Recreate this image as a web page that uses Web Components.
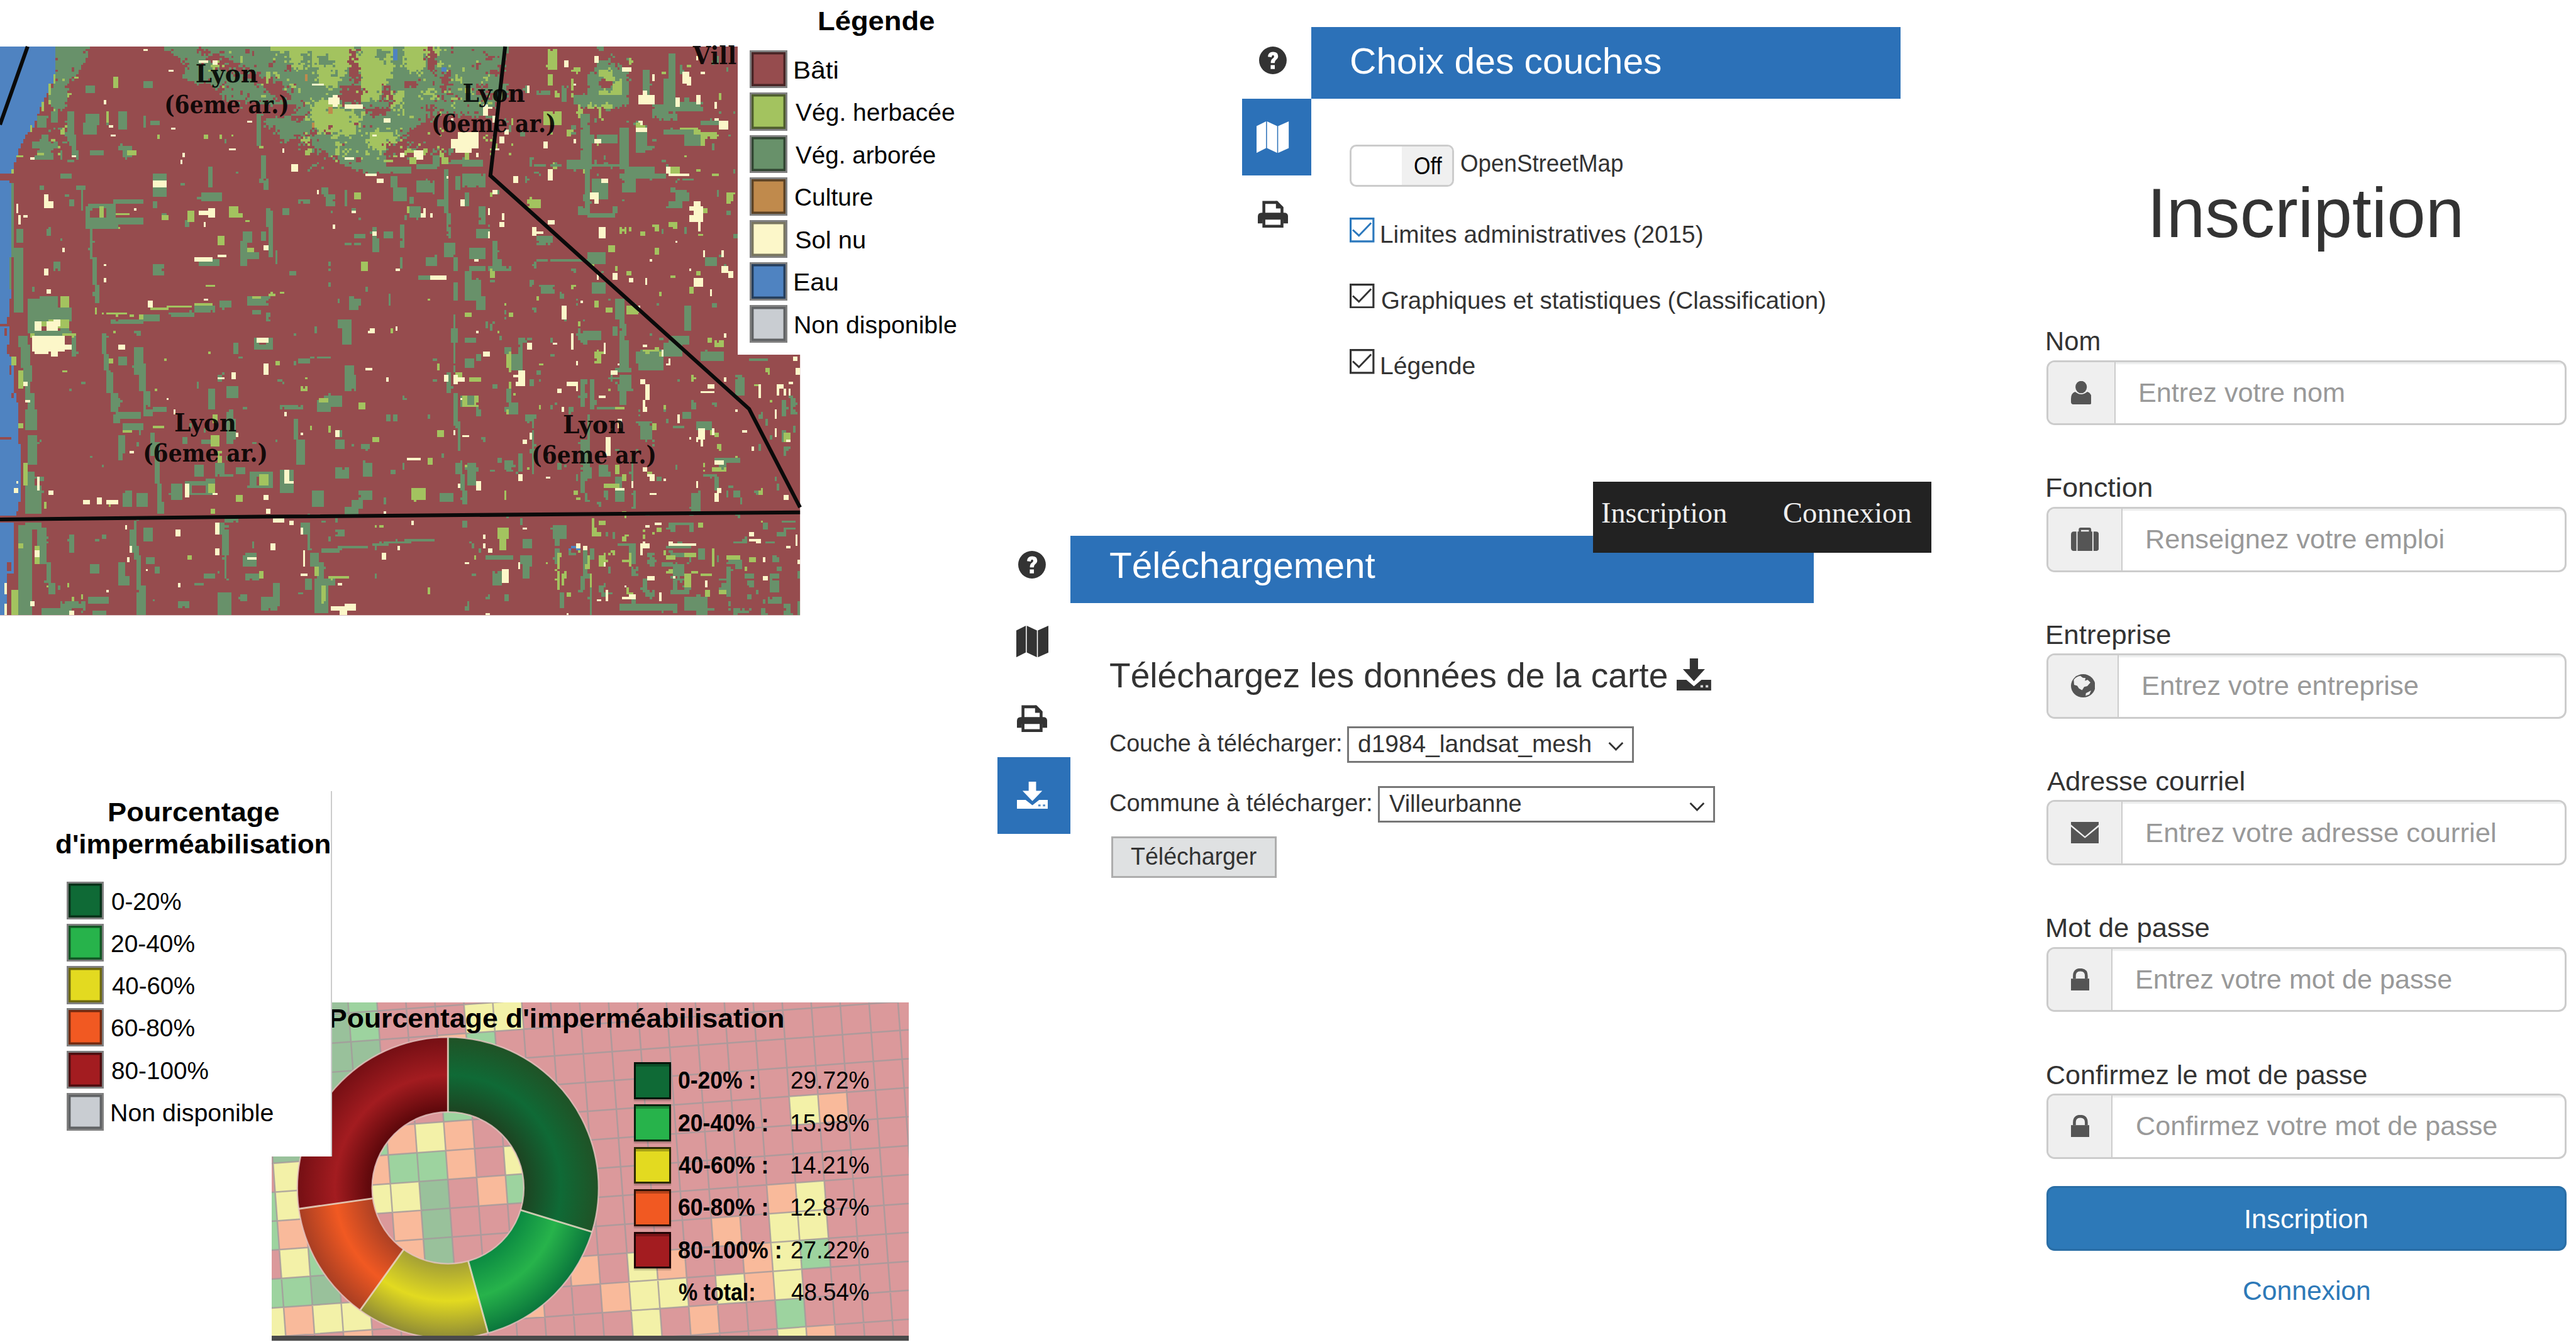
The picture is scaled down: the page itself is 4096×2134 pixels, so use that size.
<!DOCTYPE html>
<html lang="fr">
<head>
<meta charset="utf-8">
<title>Inscription</title>
<style>
/* 1rem = ten layout units on a 1568-unit wide board */
html{font-size:calc(100vw / 156.8)}
body{margin:0;display:flex;height:100vh;overflow:hidden;background:#fff;color:#333;font-family:"Liberation Sans",Arial,sans-serif;font-size:1.48rem}
.left{width:60rem;flex:none;display:flex;flex-direction:column;position:relative}
.mid{width:64.56rem;flex:none;display:flex;flex-direction:column;position:relative}
.right{width:31.65rem;flex:none;display:flex;flex-direction:column}
land-map{margin-top:2.84rem}
.lc1{position:absolute;left:44.9rem;top:0;--pl:.75rem;--h:21.6rem;--w:15rem;--pitch:2.585rem}
.lc1 h2{margin:0;height:2.92rem;line-height:2.62rem;font-size:1.62rem;padding-left:4.15rem}
.imperv{position:relative;margin-top:10.69rem;height:33.5rem}
.lc2{position:absolute;left:2rem;top:0;--pl:2.05rem;--h:22.26rem;--w:18.22rem;--pitch:2.575rem;--edge:.11rem solid #ccc}
.lc2 h2{margin:0 0 1.12rem;padding:.3rem 0 0 0;font-size:1.62rem;line-height:1.98rem;font-weight:bold}
.lc2 h2 div:first-child{padding-left:2.53rem}
.lc2 h2 div:last-child{margin-left:-.69rem}
imperv-chart{padding:12.88rem 0 0 16.52rem}
.p1{margin:1.32rem 0 0 15.61rem;height:30.72rem;--rail:4.2rem;--nudge:.45rem;--ht:.34rem;--hw:35.88rem;--hh:4.34rem;--hp:.24rem;--tab:4.69rem}
.p2{margin-left:.72rem;--rail:4.44rem;--nudge:.22rem;--ht:.57rem;--hw:45.26rem;--hh:4.12rem;--hp:.48rem;--tab:4.68rem}
h3{margin:0;font-weight:normal;font-size:2.1rem;display:flex;align-items:center;height:3rem;padding-top:2.87rem}
h1{margin:0;padding:10rem 0 3.76rem;height:6rem;line-height:6rem;font-weight:normal;font-size:4.25rem;text-align:center}
a{color:#2d79b8;text-align:center;line-height:2rem;margin-top:1.4rem;font-size:1.65rem}
</style>
</head>
<body>
<section class="left">
  <land-map></land-map>
  <legend-card class="lc1"><h2 slot="title" style="color:#000"><t-fit w="71.2">Légende</t-fit></h2>
    <legend-row color="#964c4e" w="26.8">Bâti</legend-row>
    <legend-row color="#a3c35f" w="97.6">Vég. herbacée</legend-row>
    <legend-row color="#68916a" w="86">Vég. arborée</legend-row>
    <legend-row color="#c08a4c" w="47.8">Culture</legend-row>
    <legend-row color="#fcf7c9" w="43">Sol nu</legend-row>
    <legend-row color="#4f83c1" w="26.8">Eau</legend-row>
    <legend-row color="#c9cdd2" w="98.8">Non disponible</legend-row>
  </legend-card>
  <div class="imperv">
    <imperv-chart></imperv-chart>
    <legend-card class="lc2"><h2 slot="title" style="color:#000"><div><t-fit w="104.6">Pourcentage</t-fit></div><div><t-fit w="167.6">d'imperméabilisation</t-fit></div></h2>
      <legend-row color="#0f6a36" w="42.8">0-20%</legend-row>
      <legend-row color="#27b34b" w="51">20-40%</legend-row>
      <legend-row color="#e3da20" w="51">40-60%</legend-row>
      <legend-row color="#f15922" w="51">60-80%</legend-row>
      <legend-row color="#a31c20" w="59.3">80-100%</legend-row>
      <legend-row color="#c9cdd2" w="99">Non disponible</legend-row>
    </legend-card>
  </div>
</section>

<section class="mid">
  <side-panel class="p1" icons="help,map,print" active="map">
    <t-fit slot="title" w="189.5">Choix des couches</t-fit>
    <toggle-row></toggle-row>
    <check-row accent="#2b78bd" w="196">Limites administratives (2015)</check-row>
    <check-row accent="#333" w="270.8">Graphiques et statistiques (Classification)</check-row>
    <check-row accent="#333" w="57.4">Légende</check-row>
  </side-panel>
  <side-panel class="p2" icons="help,map,print,download" active="download">
    <t-fit slot="title" w="162.4">Téléchargement</t-fit>
    <h3><t-fit w="340">Téléchargez les données de la carte</t-fit><ui-icon name="download" style="width:2.1rem;height:1.95rem;margin:0 0 .1rem .56rem"></ui-icon></h3>
    <select-row style="margin-top:1.6rem" label="Couche à télécharger:" lw="141.3" gap="3.6" box="174.6" w="142">d1984_landsat_mesh</select-row>
    <select-row style="margin-top:1.42rem" label="Commune à télécharger:" lw="159.7" gap="4.1" box="205" w="81">Villeurbanne</select-row>
    <grey-button style="margin-top:.84rem"><t-fit w="77.6">Télécharger</t-fit></grey-button>
  </side-panel>
  <nav-strip></nav-strip>
</section>

<section class="right">
  <h1><t-fit w="187.6">Inscription</t-fit></h1>
  <form-field label="Nom" lw="32.6" icon="user" iw="12.6" ih="14.2" aw="42.3" w="125">Entrez votre nom</form-field>
  <form-field label="Fonction" lw="64.2" icon="case" iw="17" ih="14.2" aw="46.7" w="181">Renseignez votre emploi</form-field>
  <form-field label="Entreprise" lw="75.8" icon="globe" iw="14.8" ih="14.2" aw="44.4" w="168.2">Entrez votre entreprise</form-field>
  <form-field label="Adresse courriel" lw="120.6" icon="mail" iw="17" ih="13" aw="46.7" w="212.6">Entrez votre adresse courriel</form-field>
  <form-field label="Mot de passe" lw="99.3" icon="lock" iw="11.4" ih="13.4" aw="40.6" w="192.4">Entrez votre mot de passe</form-field>
  <form-field label="Confirmez le mot de passe" lw="195.3" icon="lock" iw="11.4" ih="13.4" aw="40.6" w="220">Confirmez votre mot de passe</form-field>
  <submit-button><t-fit w="74.7">Inscription</t-fit></submit-button>
  <a><t-fit w="77.4">Connexion</t-fit></a>
</section>

<script>
const U = innerWidth / 1568;
function define(name, html, setup) {
  customElements.define(name, class extends HTMLElement {
    connectedCallback() {
      if (this.shadowRoot) return;
      const root = this.attachShadow({ mode: 'open' });
      root.innerHTML = typeof html === 'function' ? html(this) : html;
      if (setup) setup(this, root);
    }
  });
}

const ICONS = {
  help: ['0 0 20 20', '<circle cx="10" cy="10" r="10" fill="currentColor"/><path d="M6.4 7.4Q6.6 3.9 10.1 3.9Q13.8 4 13.8 7Q13.8 8.7 12.4 9.6Q11.3 10.4 11.3 12H8.5Q8.4 9.6 10 8.6Q10.9 8 10.9 7.2Q10.9 6.3 10 6.3Q9.1 6.4 9.1 7.7Z M8.4 13.4h3v2.9h-3z" fill="var(--hole,#fff)"/>'],
  map: ['0 0 20 20', '<path d="M0 3L5.9 0V17L0 20ZM6.5 0L12.8 3V20L6.5 17ZM13.4 3L20 0V17L13.4 20Z" fill="currentColor"/>'],
  print: ['0 0 20 18', '<path d="M4 9V1.2H12.6L16 4.6V9" fill="none" stroke="currentColor" stroke-width="1.9"/><path d="M12 0V5.2H17Z" fill="currentColor"/><path d="M2.6 8H17.4Q20 8 20 10.6V15H16.8V12.6H3.2V15H0V10.6Q0 8 2.6 8Z" fill="currentColor"/><path d="M4 12V16.9H16V12" fill="none" stroke="currentColor" stroke-width="1.9"/>'],
  download: ['0 0 20 18', '<path d="M7.6 0h4.8v6H16.4L10 12.8 3.6 6H7.6Z" fill="currentColor"/><path d="M0 12H5.6L10 15.6 14.4 12H20V18H0Z" fill="currentColor"/><path d="M13.8 15h1.5v1.3h-1.5zM16.8 15h1.5v1.3h-1.5z" fill="var(--hole,#fff)" opacity=".8"/>'],
  user: ['0 0 12 14', '<ellipse cx="5.9" cy="3.6" rx="3.3" ry="3.7" fill="currentColor"/><path d="M2.4 6.4Q5.9 9.4 9.4 6.4Q12 7.2 12 10.6V12.5Q12 14 10.5 14H1.5Q0 14 0 12.5V10.6Q0 7.2 2.4 6.4Z" fill="currentColor"/>'],
  case: ['0 0 17 14', '<path d="M5.4 3V1.1Q5.4.7 5.9.7H11.1Q11.6.7 11.6 1.1V3" fill="none" stroke="currentColor" stroke-width="1.4"/><path d="M4 2.4H13V14H4ZM3.3 2.4V14H1.8Q0 14 0 12.2V4.2Q0 2.4 1.8 2.4ZM13.7 2.4H15.2Q17 2.4 17 4.2V12.2Q17 14 15.2 14H13.7Z" fill="currentColor"/>'],
  globe: ['0 0 14 14', '<circle cx="7" cy="7" r="7" fill="currentColor"/><path d="M1.6 3.4Q3 1.4 5.4 1L6.8 2.2 8.4 2.4 8 4 9.6 3.4 11.2 5 9.4 7.2 7.6 7.6 6.4 9.6 4.6 8.6 3.6 7 1.8 6.4ZM8.6 11.4L11.6 9.8 10.6 12.2 8.4 13Z" fill="#efefef"/>'],
  mail: ['0 0 17 13', '<path d="M0 0H17V1.6L8.5 8.8 0 1.6ZM0 2.9L8.5 9.9 17 2.9V13H0Z" fill="currentColor"/>'],
  lock: ['0 0 11 13', '<path d="M2 6V4.4Q2 .8 5.5.8T9 4.4V6" fill="none" stroke="currentColor" stroke-width="1.7"/><path d="M0 6H11V13H0Z" fill="currentColor"/>']
};
define('ui-icon', el => { const [vb, art] = ICONS[el.getAttribute('name')];
  return `<style>:host{display:block;flex:none}svg{display:block;width:100%;height:100%}</style><svg viewBox="${vb}" preserveAspectRatio="none">${art}</svg>`; });

define('legend-row', el => `<style>:host{display:flex;align-items:center;height:var(--pitch,2.58rem);font-size:1.52rem;color:#000}
i{box-sizing:border-box;width:2.28rem;height:2.32rem;border:.12rem solid #808080;background:${el.getAttribute('color')};box-shadow:inset 0 0 0 .13rem rgba(0,0,0,.52);margin-right:.42rem}
t-fit{margin-top:.1rem}</style>
<i></i><t-fit w="${el.getAttribute('w')}">${el.textContent}</t-fit>`);
define('legend-card', `<style>:host{display:block;box-sizing:border-box;background:#fff;width:var(--w);height:var(--h);padding-left:var(--pl);border-right:var(--edge,none)}</style><slot name="title"></slot><slot></slot>`);

define('side-panel', el => `<style>:host{display:flex;align-items:flex-start}
.rail{width:var(--rail);flex:none;display:flex;flex-direction:column}
.tab{height:var(--tab);display:flex;align-items:center;justify-content:center;padding-right:var(--nudge);color:#333}
.tab.on{background:#2c71b8;color:#fff;--hole:#2c71b8}
.main{margin-top:var(--ht)}
header{box-sizing:border-box;width:var(--hw);height:var(--hh);background:#2c71b8;color:#fff;display:flex;align-items:center;padding:0 0 var(--hp) 2.35rem;font-size:2.2rem}
.body{padding-left:2.35rem;display:flex;flex-direction:column;align-items:flex-start}</style>
<div class="rail">${el.getAttribute('icons').split(',').map(n => {
  const s = { help: '1.68rem;height:1.68rem', map: '1.96rem;height:1.92rem', print: '1.84rem;height:1.66rem', download: '1.88rem;height:1.66rem' }[n];
  return `<div class="tab${n === el.getAttribute('active') ? ' on' : ''}"><ui-icon name="${n}" style="width:${s}"></ui-icon></div>`; }).join('')}</div>
<div class="main"><header><slot name="title"></slot></header><div class="body"><slot></slot></div></div>`);

define('toggle-row', `<style>:host{display:flex;align-items:center;margin:2.81rem 0 .89rem;height:2.57rem}
.sw{box-sizing:border-box;width:6.33rem;height:2.57rem;border:.13rem solid #ccc;border-radius:.4rem;display:flex;overflow:hidden;color:#000}
.sw i{width:3.05rem}.sw b{flex:1;background:#f0f0f0;font-weight:normal;display:flex;align-items:center;padding-left:.72rem}
.t{padding:0 0 .28rem .38rem}</style>
<div class="sw"><i></i><b><t-fit w="17.8">Off</t-fit></b></div><div class="t"><t-fit w="99.3">OpenStreetMap</t-fit></div>`);

define('check-row', el => `<style>:host{display:flex;align-items:center;height:3.995rem}
svg{width:1.51rem;height:1.51rem;margin:0 .38rem .5rem 0;flex:none}t-fit{margin-top:.06rem}</style>
<svg viewBox="0 0 15 15" fill="none" stroke="${el.getAttribute('accent')}"><path d="M.6.6H14.4V14.4H.6Z" stroke-width="1.2"/><path d="M1.9 7.4L5.6 10.9 13 3.2" stroke-width="1.1"/></svg><t-fit w="${el.getAttribute('w')}">${el.textContent}</t-fit>`);

define('select-row', el => `<style>:host{display:flex;align-items:center;height:2.22rem}
.l{padding-bottom:.12rem}
.box{box-sizing:border-box;width:${el.getAttribute('box') / 10}rem;height:2.22rem;margin-left:${el.getAttribute('gap') / 10}rem;border:.12rem solid #777;display:flex;align-items:center;justify-content:space-between;padding:0 .5rem .06rem .5rem;color:#333}
svg{width:.95rem;height:.6rem;margin-top:.35rem}</style>
<div class="l"><t-fit w="${el.getAttribute('lw')}">${el.getAttribute('label')}</t-fit></div>
<div class="box"><t-fit w="${el.getAttribute('w')}">${el.textContent}</t-fit><svg viewBox="0 0 9.5 6" fill="none" stroke="#333" stroke-width="1.1"><path d="M.6.8L4.75 5 8.9.8"/></svg></div>`);

define('grey-button', `<style>:host{display:flex;box-sizing:border-box;align-items:center;justify-content:center;width:10.06rem;height:2.56rem;margin-left:.13rem;background:#dfe1e2;border:.12rem solid #adadad;padding-bottom:.06rem}</style><slot></slot>`);

define('nav-strip', `<style>:host{position:absolute;left:36.97rem;top:29.32rem;width:20.61rem;height:4.33rem;box-sizing:border-box;background:#222;color:#eee;display:flex;align-items:center;gap:3.35rem;padding:0 0 .5rem .46rem;font-family:"Liberation Serif","Times New Roman",serif;font-size:1.74rem}</style>
<t-fit w="77.3">Inscription</t-fit><t-fit w="79">Connexion</t-fit>`);

define('form-field', el => { const a = n => el.getAttribute(n); return `<style>:host{display:block;height:8.93rem}
:host(:nth-of-type(6)){height:7.78rem}
.lab{line-height:2rem;height:2rem;font-size:1.63rem}
.in{box-sizing:border-box;margin-top:.16rem;height:3.97rem;border:.13rem solid #ccc;border-radius:.5rem;display:flex;overflow:hidden}
.add{box-sizing:border-box;width:${(a('aw') - 1.3) / 10}rem;background:#efefef;border-right:.11rem solid #ccc;color:#555;display:flex;align-items:center;padding-left:1.37rem}
.txt{flex:1;display:flex;align-items:center;padding-left:1.42rem;color:#999;font-size:1.65rem;box-shadow:inset 0 .12rem 0 #eeefef}
ui-icon{width:${a('iw') / 10}rem;height:${a('ih') / 10}rem}</style>
<div class="lab"><t-fit w="${a('lw')}">${a('label')}</t-fit></div>
<div class="in"><div class="add"><ui-icon name="${a('icon')}"></ui-icon></div><div class="txt"><t-fit w="${a('w')}">${el.textContent}</t-fit></div></div>`; });

define('submit-button', `<style>:host{box-sizing:border-box;display:flex;align-items:center;justify-content:center;height:3.97rem;background:#2d79b8;border:.13rem solid #2a6ea6;border-radius:.5rem;color:#fff;font-size:1.65rem;padding-top:.06rem}</style><slot></slot>`);

/* Ring chart over a tilted mesh map */
define('imperv-chart', () => {
  const CX = 272.5, CY = 723.2, R = 91.7, r = 46.2, P = 17.57, A = 4.2 * Math.PI / 180, OX = 229.3, OY = 610.3, DY = 5.2;
  const C = { G: '#9dd39f', D: '#99c19b', Y: '#f3f1a8', O: '#f9ba9b' };
  const cells = {
    D: '175 60 175 150 178 280 235 280 178 400 30 748 400 900 405 1040 410 1160 135 1330',
    G: '230 60 235 150 515 195 455 555 395 780 320 790 278 710 595 880 12 1100 12 930 115 1215 65 1345 15 1350 1320 1190 1257 1460',
    Y: '510 100 580 100 385 650 600 750 275 920 330 915 40 820 40 950 60 1215 15 1470 140 1465 210 1450 1293 540 1308 920 1243 1070 1313 1060 1250 1190 900 1240 905 1360 975 1350 1113 1340 1253 1320 908 1490 1260 1537',
    O: '445 192 325 650 460 635 460 760 270 800 540 890 335 1040 340 1140 55 1080 70 1470 215 1534 1360 525 1240 930 1105 1080 1180 1190 970 1230 765 1250 835 1370 1180 1320 1048 1480 640 1450 1330 1530'
  };
  let mesh = '';
  for (const k in cells) { const n = cells[k].split(' ').map(Number);
    for (let i = 0; i < n.length; i += 2) {
      const dx = 163.2 + n[i] * .2512 - OX, dy = 604.9 + n[i + 1] * .13512 - OY;
      const lx = dx * Math.cos(A) - dy * Math.sin(A), ly = dx * Math.sin(A) + dy * Math.cos(A);
      const gx = Math.floor(lx / P) * P, gy = Math.floor((ly - DY) / P) * P + DY;
      mesh += `<rect x="${gx}" y="${gy}" width="${P}" height="${P}" fill="${C[k]}"/>`;
    } }
  let lines = '';
  for (let i = -8; i < 25; i++) lines += `M${i * P} -60V300M-120 ${i * P + DY}H400`;
  const pt = (a, rad) => `${CX + rad * Math.sin(a)} ${CY - rad * Math.cos(a)}`;
  const parts = [[29.72, '#1d4321', '#0f6a36', '#205226'], [15.98, '#0b8a42', '#27b34b', '#0a753c'], [14.21, '#a39f36', '#e2da20', '#8e8a36'], [12.87, '#ac4024', '#f15922', '#a83e23'], [27.22, '#5a070a', '#a31c20', '#750f14']];
  let a = 0, ring = '', grads = '', seps = '';
  parts.forEach(([p, c1, c2, c3], i) => { const b = a + p / 100 * 2 * Math.PI, big = b - a > Math.PI ? 1 : 0;
    grads += `<radialGradient id="g${i}" gradientUnits="userSpaceOnUse" cx="${CX}" cy="${CY}" r="${R}"><stop offset=".5" stop-color="${c1}"/><stop offset=".75" stop-color="${c2}"/><stop offset="1" stop-color="${c3}"/></radialGradient>`;
    ring += `<path d="M${pt(a, r)}L${pt(a, R)}A${R} ${R} 0 ${big} 1 ${pt(b, R)}L${pt(b, r)}A${r} ${r} 0 ${big} 0 ${pt(a, r)}Z" fill="url(#g${i})"/>`;
    seps += `M${pt(a, r)}L${pt(a, R)}`; a = b; });
  const rows = [['0-20% :', 47.2, '29.72%', '#0f6a36'], ['20-40% :', 54.8, '15.98%', '#27b34b'], ['40-60% :', 54.8, '14.21%', '#e3da20'], ['60-80% :', 54.8, '12.87%', '#f15922'], ['80-100% :', 63, '27.22%', '#a31c20'], ['% total:', 46.9, '48.54%', '']];
  return `<style>:host{display:block}
.fig{position:relative;width:38.78rem;height:20.28rem;border-bottom:.34rem solid #4a4a4a;overflow:hidden}
svg{display:block;width:100%;height:100%}
.over{position:absolute;inset:0;display:flex;flex-direction:column;color:#000}
.ti{font-weight:bold;font-size:1.6rem;line-height:2rem;height:3.46rem;padding-left:3.48rem;box-sizing:border-box}
.r{display:flex;align-items:center;height:2.58rem;padding-left:22.08rem;font-size:1.46rem}
i{box-sizing:border-box;width:2.26rem;height:2.24rem;border:.13rem solid rgba(0,0,0,.8);box-shadow:inset 0 .15rem 0 rgba(0,0,0,.25),0 .12rem .05rem rgba(0,0,0,.2);margin-right:.38rem}
.l{width:6.84rem;font-weight:bold}</style>
<div class="fig"><svg viewBox="165.2 610.3 387.8 202.8" preserveAspectRatio="none"><defs>${grads}</defs>
<rect x="165" y="610" width="389" height="204" fill="#db999b"/>
<g transform="translate(${OX} ${OY}) rotate(-4.2)">${mesh}<path d="${lines}" stroke="#a39a9b" stroke-width=".95" fill="none" opacity=".8"/></g>
${ring}<path d="${seps}" stroke="#e9d9c4" stroke-width="1.1" opacity=".85"/><circle cx="${CX}" cy="${CY}" r="${R}" fill="none" stroke="#e6c4c0" stroke-width=".9" opacity=".8"/><circle cx="${CX}" cy="${CY}" r="${r}" fill="none" stroke="#e6c4c0" stroke-width=".9" opacity=".8"/></svg>
<div class="over"><div class="ti"><t-fit w="276.8">Pourcentage d'imperméabilisation</t-fit></div>
${rows.map(([l, w, v, c]) => `<div class="r"><i style="${c ? 'background:' + c : 'visibility:hidden'}"></i><div class="l"><t-fit w="${w}">${l}</t-fit></div><t-fit w="48.2">${v}</t-fit></div>`).join('')}</div></div>`;
});

define('land-map', () => {
  const W = 346, H = 246, grid = new Uint8Array(W * H);
  let seed = 7; const rnd = () => (seed = (seed * 1664525 + 1013904223) >>> 0) / 4294967296;
  const set = (x, y, v) => { if (x >= 0 && y >= 0 && x < W && y < H) grid[y * W + x] = v; };
  const fill = (x0, y0, x1, y1, v) => { for (let y = y0; y < y1; y++) for (let x = x0; x < x1; x++) set(x, y, v); };
  const T = [
    [x => x / 7.127, y => (y - 226) / 11.2],
    [x => 200 + x / 6.817, y => (y - 198) / 9.8],
    [x => x / 7.127, y => 115.8 + y / 11.53],
    [x => 200 + x / 9.8, y => 119.8 + y / 11.88]
  ];
  const nums = s => s.trim().split(/[\s,]+/).map(Number);
  const rects = (t, v, s) => { const n = nums(s); for (let i = 0; i < n.length; i += 4) {
    const x0 = Math.round(T[t][0](n[i])), y0 = Math.round(T[t][1](n[i + 1]));
    fill(x0, y0, Math.max(x0 + 1, Math.round(T[t][0](n[i + 2]))), Math.max(y0 + 1, Math.round(T[t][1](n[i + 3]))), v); } };
  const poly = (t, v, s) => { const n = nums(s), p = []; for (let i = 0; i < n.length; i += 2) p.push([T[t][0](n[i]), T[t][1](n[i + 1])]);
    for (let y = 0; y < H; y++) { const xs = []; for (let i = 0; i < p.length; i++) { const [ax, ay] = p[i], [bx, by] = p[(i + 1) % p.length];
      if ((ay <= y + .5) !== (by <= y + .5)) xs.push(ax + (y + .5 - ay) / (by - ay) * (bx - ax)); }
      xs.sort((a, b) => a - b); for (let i = 0; i + 1 < xs.length; i += 2) fill(Math.round(xs[i]), y, Math.round(xs[i + 1]), y + 1, v); } };
  const B = 0, G = 1, L = 2, S = 3, E = 4, K = 5;
  const specks = (x0, y0, x1, y1, n, mix, bw, bh) => { for (let i = 0; i < n; i++) {
    const x = x0 + Math.floor(rnd() * (x1 - x0)), y = y0 + Math.floor(rnd() * (y1 - y0)), v = mix[Math.floor(rnd() * mix.length)];
    const w = 1 + Math.floor(rnd() * bw), h = 1 + Math.floor(rnd() * bh); fill(x, y, Math.min(x + w, x1), Math.min(y + h, y1), v); } };
  /* ragged edges: copy a close neighbour into some of the cells */
  const fray = (x0, y0, x1, y1, p, d) => { for (let y = y0; y < y1; y++) for (let x = x0; x < x1; x++) if (rnd() < p) {
    const nx = Math.min(W - 1, Math.max(0, x + Math.round((rnd() * 2 - 1) * d))), ny = Math.min(H - 1, Math.max(0, y + Math.round((rnd() * 2 - 1) * d)));
    const v = grid[ny * W + nx], o = grid[y * W + x]; if (v < 3 && o < 3) grid[y * W + x] = v; } };

  specks(12, 30, 200, 125, 60, [G, G, G, L, S], 1.6, 2.5);
  specks(12, 120, 200, 246, 100, [G, G, G, L, S], 1.6, 2.5);
  specks(205, 0, 346, 130, 260, [G, G, G, L, S], 1.8, 3);
  specks(200, 125, 346, 246, 190, [G, G, G, L, S], 1.6, 3);
  specks(255, 205, 346, 246, 30, [G, G, L], 3.5, 2.5);

  /* park and river bank */
  poly(0, G, '172 226 278 226 262 300 250 315 240 360 215 380 205 460 195 540 160 530 150 480 172 400');
  poly(0, G, '500 226 1568 226 1568 470 1500 520 1340 480 1300 600 1240 660 1190 700 1190 810 1130 845 1060 800 985 715 930 660 890 680 800 580 900 560 910 510 800 500 700 480 660 420 570 390 575 310');
  poly(0, B, '600 226 740 310 860 400 900 470 880 500 800 420 690 340 640 300');
  rects(0, B, '500 290 570 400 1078 235 1105 410 1055 420 1110 510 1320 226 1350 330 1360 340 1390 470 1540 290 1568 400 1140 520 1200 560 1180 420 1205 500 900 560 960 580 1245 390 1280 430 880 320 905 350');
  poly(0, L, '830 226 1078 226 1078 280 1055 380 1040 425 985 410 985 330 935 320 920 345 895 330 900 260 840 260');
  poly(0, L, '1105 226 1215 226 1215 370 1180 430 1160 500 1115 500 1110 420');
  poly(0, L, '1250 226 1320 226 1310 340 1270 350 1235 320');
  poly(0, L, '960 490 1010 480 1060 540 1140 535 1095 610 1095 650 970 650');
  poly(0, L, '1205 440 1250 440 1245 510 1200 515');
  poly(0, L, '1130 640 1210 645 1200 690 1185 740 1150 730');
  rects(0, G, '980 270 1020 320 1165 250 1190 290 930 260 960 310 1020 340 1040 370 700 440 760 480 1340 500 1500 560');
  specks(85, 0, 130, 22, 40, [G, L, B], 2, 2.5); specks(130, 20, 200, 50, 110, [G, L, L, B], 2, 3); specks(184, 0, 214, 30, 70, [B, B, L, G], 3, 2);
  specks(20, 5, 34, 50, 34, [G, L, B], 2, 2); specks(12, 40, 34, 50, 16, [G], 3, 3);
  fray(70, 0, 220, 56, .55, 2.2); fray(20, 0, 40, 40, .4, 1.5);
  rects(0, E, '1213 237 1227 292 1363 326 1376 345'); rects(0, K, '940 362 947 392 1012 518 1024 550 962 596 972 618');
  rects(0, G, '1140 810 1270 840 1160 790 1190 815 1285 795 1350 815 1330 755 1355 810 1390 775 1490 800 1365 820 1380 1030 1378 1030 1392 1150 1365 1180 1405 1240 1398 1240 1412 1310 1350 965 1370 1000');
  rects(0, S, '1012 475 1050 505 1025 460 1040 520 1060 505 1120 530 1390 670 1478 715 1408 640 1478 675 1405 700 1455 738 1490 510 1505 560 1515 560 1530 600 1465 740 1478 763 1235 740 1248 760 1275 735 1305 780 1128 842 1163 852 1163 866 1185 886 1060 762 1092 773 610 292 640 305 657 292 670 315 1145 650 1165 668 1185 575 1205 595 960 405 1000 420');
  rects(0, L, '645 315 675 330 930 675 955 685 1265 765 1280 800 1360 765 1380 795 1430 740 1445 780 340 1035 400 1040');
  /* west side streets and courts */
  rects(0, G, '112 565 140 615 160 545 175 595 265 555 305 610 258 600 300 650 208 540 225 680 220 650 238 745 130 655 150 720 120 680 158 770 105 755 130 780 278 725 318 750 365 710 405 730 380 730 405 762 790 555 805 705 830 570 860 610 860 610 895 670 185 845 218 862 238 895 262 920 250 900 258 1020 265 1000 275 1110 278 1110 285 1250 285 1250 298 1380 292 1380 305 1470 270 985 350 1012 350 968 440 985 330 990 355 1055 268 1060 360 1108 340 1055 442 1085 470 842 512 880 470 905 515 955 480 890 505 915 640 810 655 910 620 930 685 975 600 950 660 965 805 755 820 880 815 860 826 918 440 562 452 615 460 585 490 612 440 395 470 430 365 545 390 625 265 420 290 455 50 1110 70 1175 143 1110 160 1143 45 1205 70 1440 40 1390 70 1510 163 1272 183 1312 470 1278 505 1332 745 1120 778 1180 742 1170 762 1285 755 1220 795 1255 805 1120 820 1165 822 1010 840 1100 828 1090 840 1250 845 1210 855 1275 615 1260 680 1295 990 910 1010 950 1005 945 1030 998 1062 920 1070 1000 890 1315 915 1340 1150 1100 1160 1220 1155 1155 1170 1220 1185 1122 1212 1155 1232 1090 1245 1200 1230 1235 1240 1300 1090 1132 1128 1155 1060 1180 1110 1190 1285 875 1340 930 1205 855 1225 910 1215 905 1255 975 1265 1000 1300 1050 1310 1240 1348 1288 1290 1335 1330 1355 1400 1370 1412 1455 1445 1200 1498 1255 1520 1180 1530 1290 1478 1110 1508 1155 1430 935 1445 1000 1405 855 1415 920 1480 1290 1568 1305 1435 1360 1480 1460 1470 1440 1500 1500 1075 1450 1115 1505 1200 1425 1207 1480 1010 1270 1020 1312 870 1005 892 1045 920 965 955 990 765 1440 830 1480 680 1460 715 1495 600 1480 660 1512 520 1510 600 1540 435 1530 490 1560 340 1545 440 1568 85 1448 178 1568 120 1435 180 1530 180 1490 220 1560 775 1505 805 1525 820 1515 832 1558');
  rects(0, L, '112 740 135 752 395 730 420 752 348 375 362 430 305 1000 320 1055 500 1040 520 1065 580 1020 598 1075 708 1000 735 1055 710 1035 748 1055 1092 932 1112 965 762 1200 783 1225 1112 1270 1135 1312 185 1437 215 1490 463 1492 520 1503 510 1480 590 1492 315 1518 400 1528 428 1525 440 1545 600 1470 668 1480 635 1380 662 1390 628 652 640 672 678 652 684 672 712 652 720 662 485 652 492 672 325 540 333 600 672 1145 690 1185 780 1440 805 1448 825 1425 848 1440 1435 1518 1455 1535 800 708 812 718');
  rects(0, S, '136 945 150 1008 150 975 163 1008 612 1020 662 1045 640 1015 662 1055 470 878 512 905 600 1245 655 1265 670 1235 698 1248 898 798 918 828 1150 1120 1163 1145 1328 1335 1378 1355 136 1300 150 1332 143 1402 157 1425 815 1190 828 1212 50 990 57 1030 57 1045 64 1087 70 1045 86 1055 320 485 328 505 320 1347 328 1368 704 720 726 730 762 585 776 597 340 652 355 662 335 605 348 620 527 618 541 628 520 338 534 348 442 237 456 248 93 764 107 775 220 753 235 764 975 922 983 942 1025 1088 1035 1110 1415 965 1432 998 1300 1032 1312 1055 1325 1032 1333 1055 1505 1120 1512 1155 1220 1300 1232 1312 1375 855 1383 865 1540 662 1552 700');

  /* north-east */
  rects(1, B, '135 205 240 350 150 600 190 740 230 730 350 1000 410 920 450 1000 520 700 550 900');
  poly(1, G, '400 250 460 270 490 310 492 440 440 470 370 460 330 440 330 410 365 390 370 320 395 290');
  rects(1, B, '410 335 445 375 420 380 435 400');
  rects(1, L, '405 300 440 330 425 290 445 345 440 345 470 400 400 380 440 408 365 445 440 462 400 465 412 510 255 205 280 292 253 320 268 362 238 472 290 530 192 845 232 883 318 335 330 410 325 290 345 310 640 545 705 575 700 560 750 590 685 580 715 620 510 533 540 570 615 710 640 745 430 1045 450 1070 485 1150 500 1172');
  fray(245, 2, 275, 32, .35, 1.4);
  rects(1, G, '560 440 610 500 595 480 635 510 590 340 625 470 610 230 625 350 535 300 550 400 345 480 378 680 362 600 382 720 358 700 378 900 340 870 370 912 370 905 450 920 465 545 490 720 472 740 512 820 480 710 565 760 560 735 600 760 370 700 470 712 305 680 362 715 200 695 290 712 220 385 258 400 290 360 308 430 590 550 680 570 655 570 700 620 700 510 775 532 630 805 665 850 610 850 645 885 630 760 680 768 620 430 710 470 385 760 432 840 510 560 545 650 375 575 460 610 220 1000 265 1040 215 1095 395 1110 370 1070 425 1120 20 1050 70 1095 92 1020 105 1130 20 1128 140 1150 10 1150 30 1210 715 1090 748 1128 355 1400 410 1440 465 1300 478 1440 450 1270 480 1350 655 1300 675 1400 525 1480 590 1568 465 1440 490 1568 590 1450 645 1510 700 1490 770 1530 135 1500 180 1568 40 970 75 1010 45 870 70 950 0 740 70 800 235 1210 270 1250 385 1200 425 1250 620 480 632 510 0 680 60 705');
  rects(1, S, '0 568 48 620 0 560 30 635 470 285 495 310 520 400 565 440 535 380 545 440 625 410 640 450 690 405 705 440 740 430 750 462 760 515 783 550 600 710 615 740 605 735 665 745 665 870 708 940 680 855 700 880 697 930 703 978 390 590 410 608 375 815 400 840 390 830 400 865 405 965 422 1008 412 760 432 780 250 718 267 765 238 600 255 625 110 580 122 610 295 1300 307 1350 680 1180 708 1215 765 1130 785 1155 785 1150 797 1182 445 1160 457 1188 60 1490 82 1508 205 965 220 1000 215 985 240 995 255 935 275 950 510 545 545 565 650 310 665 350 660 330 672 368 390 235 405 270 320 1440 330 1480 417 1450 424 1500 770 1410 780 1430');
  rects(1, B, '668 890 685 912');
  rects(1, L, '390 1490 410 1540 740 1440 770 1470 130 1490 145 1560 485 1300 515 1330 775 820 800 860 735 735 758 750 565 1470 580 1490 420 1305 440 1325');

  /* south-west */
  poly(0, E, '0 226 172 226 172 360 150 440 125 515 105 610 80 650 55 740 44 800 36 842 0 842');
  poly(0, E, '0 876 30 876 36 900 36 1400 28 1500 22 1568 0 1568');
  rects(0, G, '36 890 43 1240 30 1240 37 1400'); rects(0, L, '165 365 172 400 150 405 158 450 128 495 135 540 92 610 100 640 50 755 70 765 36 820 43 842');
  poly(2, E, '0 60 28 60 30 200 42 260 44 380 57 470 57 640 64 660 64 920 50 1008 0 1008');
  poly(2, E, '0 1040 42 1040 42 1290 20 1300 20 1500 0 1500'); rects(2, E, '0 0 20 36'); rects(2, B, '0 615 36 627 14 70 20 105 22 150 28 195 28 260 35 300 36 400 42 418 22 1240 34 1280');
  rects(2, G, '85 0 107 95 107 0 215 40 185 70 220 105 110 80 220 110 222 95 235 205 58 105 86 160 64 150 92 270 72 260 98 340 78 340 92 430 85 400 106 480 78 470 112 575 86 605 112 755 78 790 106 995 100 860 128 995 60 1055 100 1500 78 1040 130 1080 115 1060 142 1245 143 1240 157 1345 150 1340 170 1400 315 95 328 195 322 195 335 280 328 280 348 400 342 400 360 485 345 420 370 465 415 165 440 300 428 250 448 380 440 380 462 465 355 490 435 520 350 500 370 540 375 545 442 580 365 605 385 690 362 680 380 730 465 595 478 700 478 640 492 845 485 845 498 995 498 940 505 995 378 880 405 960 422 890 455 965 365 210 395 255 470 467 512 485 442 478 470 512 402 1075 420 1190 412 1030 420 1100 412 1150 430 1240 420 1200 438 1350 422 1350 448 1500 443 1065 468 1130 450 1215 478 1250 362 1240 385 1350 362 1300 398 1355 278 1250 305 1290 215 1100 228 1190 185 1435 265 1470 165 1465 215 1503 130 1470 220 1500 270 1410 335 1445 285 1480 328 1503 785 120 842 175 720 140 734 195 1042 20 1080 70 1055 60 1080 150 1395 0 1405 100 1390 75 1412 140 1395 140 1402 290 1378 295 1390 395 1400 400 1408 560 1408 540 1418 685 1405 735 1425 800 1415 800 1432 880 1425 880 1440 950 1062 260 1092 385 1070 300 1100 385 955 205 1022 222 920 220 955 242 1000 410 1055 460 975 430 1020 488 865 450 935 480 905 525 920 630 912 630 940 750 700 365 735 420 640 375 662 475 620 620 650 650 698 478 718 650 695 520 730 620 768 785 840 870 865 770 905 890 725 760 755 800 665 740 690 810 665 795 720 810 600 755 630 810 525 845 560 920 570 830 662 900 635 820 660 900 965 880 998 960 1105 880 1145 930 1080 920 1120 970 1065 960 1105 1000 1035 760 1075 820 1120 735 1150 810 1030 620 1060 670 1115 650 1140 672 690 1010 735 1040 672 1040 690 1100 683 1080 705 1200 690 1200 700 1320 750 1190 792 1260 755 1295 800 1330 628 1295 662 1318 668 1390 712 1503 840 1340 862 1450 805 1410 858 1478 742 1400 762 1435 550 1435 583 1468 930 1035 955 1100 948 1100 955 1180 955 1190 985 1260 978 1240 998 1320 990 1170 1055 1190 1040 1155 1130 1172 1150 1145 1200 1160 1180 1130 1270 1145 1250 1115 1340 1122 970 1320 1035 1355 968 1345 1012 1490 940 1320 962 1380 1035 1070 1062 1110 1430 225 1460 265 1435 118 1470 140 1420 405 1475 465 1355 885 1398 935 1448 745 1468 815 1495 1205 1568 1225 1520 1285 1545 1330 600 1340 625 1345');
  rects(2, B, '592 850 635 890 795 130 820 148 792 815 825 850');
  rects(2, L, '130 35 180 60 150 30 215 70 190 95 235 105 57 280 70 370 36 212 50 255 57 548 70 570 72 735 84 850 36 1380 56 1500 57 1145 70 1170 107 1158 120 1250 335 220 348 245 378 583 405 595 470 560 505 570 655 500 670 540 650 600 678 660 668 685 684 745 795 800 828 860 728 905 748 940 575 1205 592 1225 800 1285 812 1318 990 1355 1005 1445 970 1260 985 1300 1015 1305 1075 1318 1535 1068 1568 1105 1545 1100 1562 1180 1405 295 1428 318 1450 318 1482 336 1430 405 1450 450 1105 445 1128 475 928 355 945 382 848 235 862 255 1010 560 1020 595 1150 615 1170 640 1350 575 1370 610 1155 1053 1185 1065 1272 870 1310 925 1320 715 1334 752 640 185 650 198 980 420 1010 440 640 845 660 890');
  rects(2, S, '100 110 200 190 107 105 150 195 150 150 222 180 157 180 178 210 107 35 128 85 143 40 178 80 163 20 185 60 365 152 385 172 790 120 828 140 813 245 828 302 255 928 278 948 298 915 313 948 328 928 362 948 876 770 890 848 884 830 905 848 570 848 584 912 655 890 670 905 660 1040 675 1100 665 1165 678 1205 840 1018 876 1040 834 1145 848 1180 115 812 121 880 398 1158 406 1190 928 1065 936 1098 932 1180 941 1260 925 1295 948 1305 1020 1458 1095 1478 1062 1447 1098 1480 1045 1478 1072 1503 107 1180 121 1215 545 1070 556 1110 712 290 727 325 670 318 690 330 1143 70 1157 95 1220 60 1227 82 1128 270 1150 280 1370 305 1384 338 1398 305 1412 345 1405 318 1432 338 1257 718 1298 730 1425 605 1448 618 1470 835 1484 880 1490 188 1512 208 1420 420 1440 432 1035 580 1048 615 813 905 828 928 820 972 834 995 43 870 57 890 93 1435 107 1458 50 830 57 845 14 1340 21 1400 14 1445 21 1500 72 340 86 362 78 430 92 442 215 1480 228 1503 1545 1275 1568 1300 1550 1300 1568 1340 1505 1170 1520 1190 765 1212 790 1225');
  rects(2, B, '1010 1355 1080 1440 1450 1300 1500 1500');

  /* south-east */
  rects(3, B, '320 560 490 640 110 800 390 960 70 1020 145 1150 210 1330 400 1490 380 240 500 300');
  rects(3, G, '510 40 590 85 670 110 708 230 650 230 716 252 668 265 716 350 668 350 698 420 620 278 690 290 570 432 690 442 542 290 560 440 502 290 520 430 745 165 855 240 738 145 770 200 858 120 920 165 880 65 960 110 1015 145 1108 160 1080 150 1108 188 1160 268 1198 375 235 70 257 215 180 120 205 160 188 340 208 410 198 405 235 468 265 468 300 500 295 490 306 770 20 718 60 830 0 770 10 880 240 670 257 765 180 700 215 765 525 465 540 800 502 720 515 870 495 600 540 740 515 740 550 810 580 730 620 790 650 790 680 850 648 860 688 918 718 680 728 820 728 860 738 950 758 530 800 600 748 505 790 525 930 458 970 495 895 520 945 540 985 505 1060 545 1350 400 1375 480 1395 385 1412 460 1356 545 1370 605 1070 695 1178 712 1085 715 1118 750 1015 778 1075 790 1065 790 1090 860 975 875 1010 960 1150 860 1178 895 385 1040 442 1105 395 1090 412 1145 395 1160 412 1240 415 1380 432 1465 540 1160 560 1210 512 1170 525 1310 515 1280 550 1310 502 1300 520 1380 540 1350 550 1500 250 1110 295 1155 248 1195 295 1240 258 1235 285 1310 100 1205 218 1216 130 1185 215 1210 130 1275 168 1345 650 1135 735 1145 708 1145 735 1240 715 1250 745 1300 785 1180 815 1240 760 1310 785 1380 770 1370 815 1400 668 1442 912 1478 895 1450 912 1490 885 1370 965 1395 895 1310 912 1380 895 1240 940 1300 845 1230 910 1250 945 1400 985 1480 975 1410 1040 1480 985 1450 1040 1500 875 1025 980 1040 875 1030 905 1072 962 1030 982 1075 865 1145 970 1156 905 1180 985 1200 1000 1160 1030 1220 1118 1255 1138 1410 1130 1215 1185 1240 1160 1225 1185 1260 1305 1290 1345 1310 1305 1325 1345 1380 1295 1410 1355 1435 1365 1440 1392 1500 1345 1015 1412 1026 1150 1122 1208 1134 1150 1470 1220 1490 1315 1195 1345 1225 1425 1440 1433 1500 640 10 660 60 690 0 698 60 1220 180 1290 190');
  rects(3, L, '560 145 590 205 198 140 208 250 198 305 208 340 150 1050 198 1105 160 1105 188 1168 648 728 665 775 678 778 698 810 805 518 826 550 580 1195 610 1250 530 1190 540 1275 542 1290 550 1355 405 1175 422 1205 405 1205 412 1370 425 1290 432 1340 708 1180 720 1250 865 1190 905 1215 940 1182 985 1205 945 1290 970 1355 1010 1288 1060 1300 1030 1372 1050 1395 1090 1370 1118 1395 1120 1190 1178 1215 1220 1205 1248 1230 1070 85 1108 120 1040 75 1060 95 30 280 78 290 0 370 70 425 1365 555 1390 605 1250 850 1275 880 1015 720 1030 765 1060 735 1118 765 1080 625 1100 645 1065 565 1090 585 1000 1025 1020 1050 825 1050 845 1072 550 1000 560 1100 442 1385 462 1410 600 820 670 840 178 860 188 905 650 435 690 442 835 145 845 170 1062 1150 1070 1250 975 1275 1000 1288 700 1380 735 1395 778 130 825 160');
  rects(3, G, '790 150 825 185 20 375 50 420');
  rects(3, S, '440 302 492 325 482 325 492 348 405 338 422 360 240 242 267 325 220 265 267 278 228 305 267 325 610 590 630 680 580 375 610 385 765 432 785 455 1040 312 1070 340 1012 348 1070 360 1002 540 1030 600 1012 600 1020 632 985 588 992 610 1256 315 1266 385 1335 315 1362 340 1335 315 1345 372 1365 335 1375 372 1385 302 1402 315 1385 340 1392 372 1325 445 1335 490 1325 540 1335 585 1070 708 1108 730 785 770 815 785 790 790 812 810 766 735 785 765 648 848 688 860 718 815 728 848 1070 870 1090 920 1080 850 1100 872 240 780 250 812 60 815 80 860 755 1132 795 1156 750 1160 760 1190 875 1122 892 1142 890 1132 990 1143 505 1145 530 1168 162 1265 198 1300 170 1300 198 1335 108 1155 130 1180 678 1405 735 1417 710 1395 735 1417 610 1370 620 1430 570 1420 590 1430 598 1230 610 1250 836 1383 845 1430 815 1026 845 1038 785 1300 815 1320 1246 1110 1266 1134 1218 1108 1266 1120 1412 1085 1423 1145 1423 1215 1433 1240 1275 1205 1285 1228 257 600 275 620 285 565 295 600 912 468 922 510 758 290 775 315 776 315 795 360 630 245 655 265 660 490 678 540 1375 595 1395 610 1412 230 1433 265 1400 165 1425 190 90 145 118 168 385 97 405 108 463 50 472 85 600 97 610 155 845 132 855 168 482 192 492 215 445 1490 452 1500 795 872 825 884 90 1085 100 1105 90 1132 100 1156 1365 885 1385 905');
  rects(3, E, '462 1145 480 1156 453 1156 462 1168 480 1156 502 1168');
  rects(3, B, '415 1300 420 1320 910 1040 960 1072 970 1300 1030 1380 735 1160 745 1250');
  fray(208, 0, 346, 246, .1, 1.2); fray(14, 40, 208, 246, .05, 1.1);

  const colors = ['', '#68916a', '#a3c35f', '#fcf7c9', '#4f83c1', '#c08a4c'], d = colors.map(() => '');
  for (let y = 0; y < H; y++) for (let x = 0; x < W;) { const v = grid[y * W + x]; let e = x + 1; while (e < W && grid[y * W + e] === v) e++; if (v) d[v] += `M${x} ${y}h${e - x}v1h${x - e}z`; x = e; }
  const label = (x, y) => `<text x="${x - 19}" y="${y}" textLength="38" lengthAdjust="spacingAndGlyphs">Lyon</text><text x="${x - 38}" y="${y + 18.4}" textLength="76" lengthAdjust="spacingAndGlyphs">(6eme ar.)</text>`;
  return `<style>:host{display:block;width:48.7rem;height:34.62rem}svg{display:block;width:100%;height:100%;overflow:visible}text{font:bold 14.8px "DejaVu Serif Condensed","DejaVu Serif",serif;fill:#000;fill-opacity:.88}</style>
<svg viewBox="0 28.4 487 346.2" preserveAspectRatio="none"><rect y="28.4" width="487" height="346.2" fill="#964c4e"/>
<g transform="translate(0 28.4) scale(${487 / 346} ${346.2 / 246})" shape-rendering="crispEdges">${d.map((p, i) => p ? `<path d="${p}" fill="${colors[i]}"/>` : '').join('')}</g>
<g fill="none" stroke="#0a0a0a" stroke-width="2.3"><path d="M16.8 28.4L0 76"/><path d="M307.5 28.4L298.5 107 456 249 487 309"/><path d="M0 316.3L160 314.6 487 312"/></g>
${label(138, 50.4)}${label(300.6, 62)}${label(125, 262.8)}${label(361.6, 263.8)}<text x="421.8" y="39.2" textLength="26.5" lengthAdjust="spacingAndGlyphs">Vill</text></svg>`;
});

/* Text run scaled so that its ink spans w layout units; defined last, once every host sets its font. */
const pen = document.createElement('canvas').getContext('2d');
define('t-fit', `<style>:host{display:inline-block;white-space:nowrap;flex:none;text-align:left}span{display:inline-block;transform-origin:0 50%}</style><span><slot></slot></span>`, (el, root) => {
  const cs = getComputedStyle(el), text = el.textContent;
  pen.font = `${cs.fontWeight} ${cs.fontSize} ${cs.fontFamily}`;
  const m = pen.measureText(text), w = el.getAttribute('w') * U;
  const k = (w - .9 * U) / (m.actualBoundingBoxLeft + m.actualBoundingBoxRight);
  const s = root.querySelector('span');
  s.style.transform = `scaleX(${k})`;
  s.style.marginLeft = m.actualBoundingBoxLeft * k + .6 * U + 'px';
  el.style.width = w + 'px';
});
</script>
</body>
</html>
